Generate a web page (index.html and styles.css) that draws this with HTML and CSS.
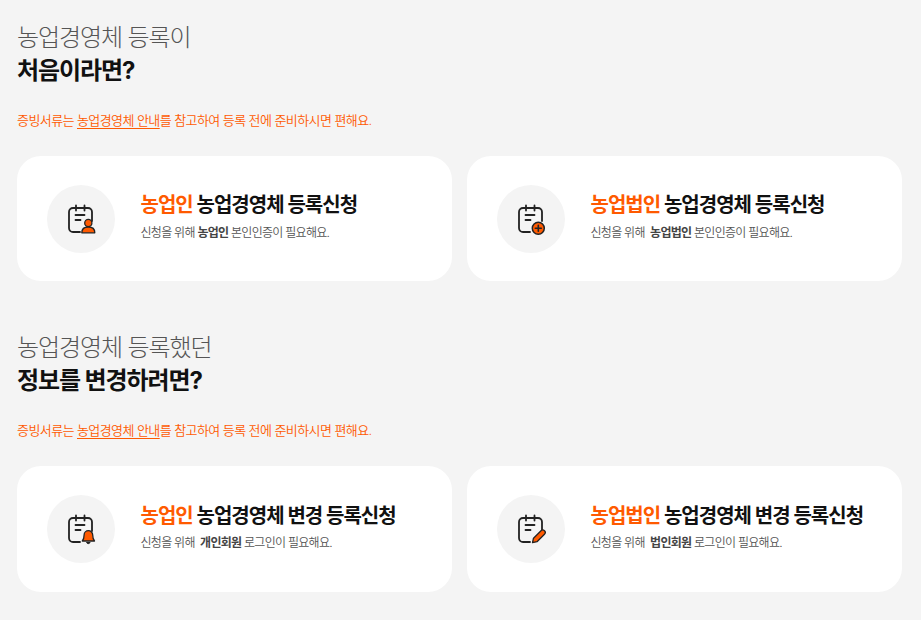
FILE: index.html
```html
<!DOCTYPE html>
<html lang="ko">
  <head>
    <meta charset="UTF-8" />
    <meta name="viewport" content="width=device-width, initial-scale=1.0" />
    <title>농업경영체 등록</title>
    <link rel="stylesheet" href="styles.css">
  </head>
  <body>
    <svg class="sprite" width="0" height="0" aria-hidden="true">
      <symbol id="cal" viewBox="0 0 32 32">
        <path d="M15 29H8a4 4 0 0 1-4-4V9a4 4 0 0 1 4-4h15a4 4 0 0 1 4 4v9" fill="none" stroke="#222" stroke-width="1.800" stroke-linecap="round"/>
        <path d="M11 2.500v5M19.500 2.500v5M10.500 12h9M10.500 17h5" fill="none" stroke="#222" stroke-width="1.800" stroke-linecap="round"/>
      </symbol>
    </svg>

    <section class="block">
      <h2 class="lead">농업경영체 등록이</h2>
      <h2 class="strong">처음이라면?</h2>
      <p class="note">증빙서류는 <a href="#">농업경영체 안내</a>를 참고하여 등록 전에 준비하시면 편해요.</p>
      <div class="cards">
        <a class="card" href="#">
          <span class="circle">
            <svg class="icon" viewBox="0 0 32 32">
              <use href="#cal" width="32" height="32"/>
              <circle cx="23.300" cy="20" r="3.600" fill="#ff5a00" stroke="#222" stroke-width="1.300"/>
              <path d="M16.800 29.800c0-3.800 2.800-5.800 6.500-5.800s6.500 2 6.500 5.800z" fill="#ff5a00" stroke="#222" stroke-width="1.300" stroke-linejoin="round"/>
            </svg>
          </span>
          <span class="txt">
            <strong class="title"><em>농업인</em> 농업경영체 등록신청</strong>
            <span class="desc">신청을 위해 <b>농업인</b> 본인인증이 필요해요.</span>
          </span>
        </a>
        <a class="card" href="#">
          <span class="circle">
            <svg class="icon" viewBox="0 0 32 32">
              <use href="#cal" width="32" height="32"/>
              <circle cx="23.300" cy="25.300" r="6" fill="#ff5a00" stroke="#222" stroke-width="1.500"/>
              <path d="M23.300 22.300v6M20.300 25.300h6" stroke="#222" stroke-width="1.600" stroke-linecap="round"/>
            </svg>
          </span>
          <span class="txt">
            <strong class="title"><em>농업법인</em> 농업경영체 등록신청</strong>
            <span class="desc">신청을 위해 &nbsp;<b>농업법인</b> 본인인증이 필요해요.</span>
          </span>
        </a>
      </div>
    </section>

    <section class="block">
      <h2 class="lead">농업경영체 등록했던</h2>
      <h2 class="strong">정보를 변경하려면?</h2>
      <p class="note">증빙서류는 <a href="#">농업경영체 안내</a>를 참고하여 등록 전에 준비하시면 편해요.</p>
      <div class="cards">
        <a class="card" href="#">
          <span class="circle">
            <svg class="icon" viewBox="0 0 32 32">
              <use href="#cal" width="32" height="32"/>
              <path d="M17.300 28c1.500-1.800 1.800-3.500 1.800-6a4.300 4.300 0 0 1 8.600 0c0 2.500.3 4.200 1.800 6z" fill="#ff5a00" stroke="#222" stroke-width="1.300" stroke-linejoin="round"/>
              <path d="M21.500 29.500a2 2 0 0 0 3.600 0z" fill="#222" stroke="#222" stroke-width="1"/>
            </svg>
          </span>
          <span class="txt">
            <strong class="title"><em>농업인</em> 농업경영체 변경 등록신청</strong>
            <span class="desc">신청을 위해 &nbsp;<b>개인회원</b> 로그인이 필요해요.</span>
          </span>
        </a>
        <a class="card" href="#">
          <span class="circle">
            <svg class="icon" viewBox="0 0 32 32">
              <use href="#cal" width="32" height="32"/>
              <path d="M17.500 29.700l1-4.500 7.500-7.500a2.400 2.400 0 0 1 3.500 3.500l-7.500 7.500z" fill="#ff5a00" stroke="#222" stroke-width="1.300" stroke-linejoin="round"/>
            </svg>
          </span>
          <span class="txt">
            <strong class="title"><em>농업법인</em> 농업경영체 변경 등록신청</strong>
            <span class="desc">신청을 위해 &nbsp;<b>법인회원</b> 로그인이 필요해요.</span>
          </span>
        </a>
      </div>
    </section>
  </body>
</html>
```

FILE: styles.css
```css
body {
  margin: 0;
  padding: 20.600px 19px 0 17px;
  background-color: #f4f4f4;
  font-family: "Inter", "Noto Sans CJK KR", sans-serif;
  color: #111;
}
.sprite {
  position: absolute;
}
.block {
  margin-bottom: 50px;
}
h2 {
  margin: 0;
  font-size: 24px;
  letter-spacing: -1.100px;
}
.lead {
  font-weight: 300;
  line-height: 33px;
  color: #555;
}
.strong {
  font-weight: 700;
  line-height: 34px;
  color: #111;
}
.note {
  margin: 23px 0 0;
  font-size: 13px;
  font-weight: 350;
  line-height: 18px;
  letter-spacing: -0.580px;
  color: #ff5a00;
}
.note a {
  color: inherit;
  text-decoration: underline;
  text-underline-offset: 3px;
}
.cards {
  display: grid;
  grid-template-columns: 435px 435px;
  gap: 15px;
  margin-top: 27px;
}
.card {
  display: flex;
  align-items: center;
  gap: 25.500px;
  height: 125.500px;
  padding-left: 30px;
  background: #fff;
  border-radius: 24px;
  text-decoration: none;
  color: inherit;
}
.circle {
  display: flex;
  align-items: center;
  justify-content: center;
  width: 68px;
  height: 68px;
  margin-top: 1px;
  border-radius: 50%;
  background: #f4f4f4;
}
.icon {
  width: 32px;
  height: 32px;
  overflow: visible;
}
.txt {
  display: flex;
  flex-direction: column;
  gap: 6.500px;
  padding-bottom: 4px;
}
.title {
  font-size: 20px;
  line-height: 26px;
  font-weight: 700;
  letter-spacing: -0.980px;
}
.title em {
  font-style: normal;
  color: #ff5a00;
}
.desc {
  font-size: 12px;
  font-weight: 350;
  line-height: 16px;
  letter-spacing: -0.720px;
  color: #555;
}
.desc b {
  font-weight: 700;
  color: #444;
}
```
